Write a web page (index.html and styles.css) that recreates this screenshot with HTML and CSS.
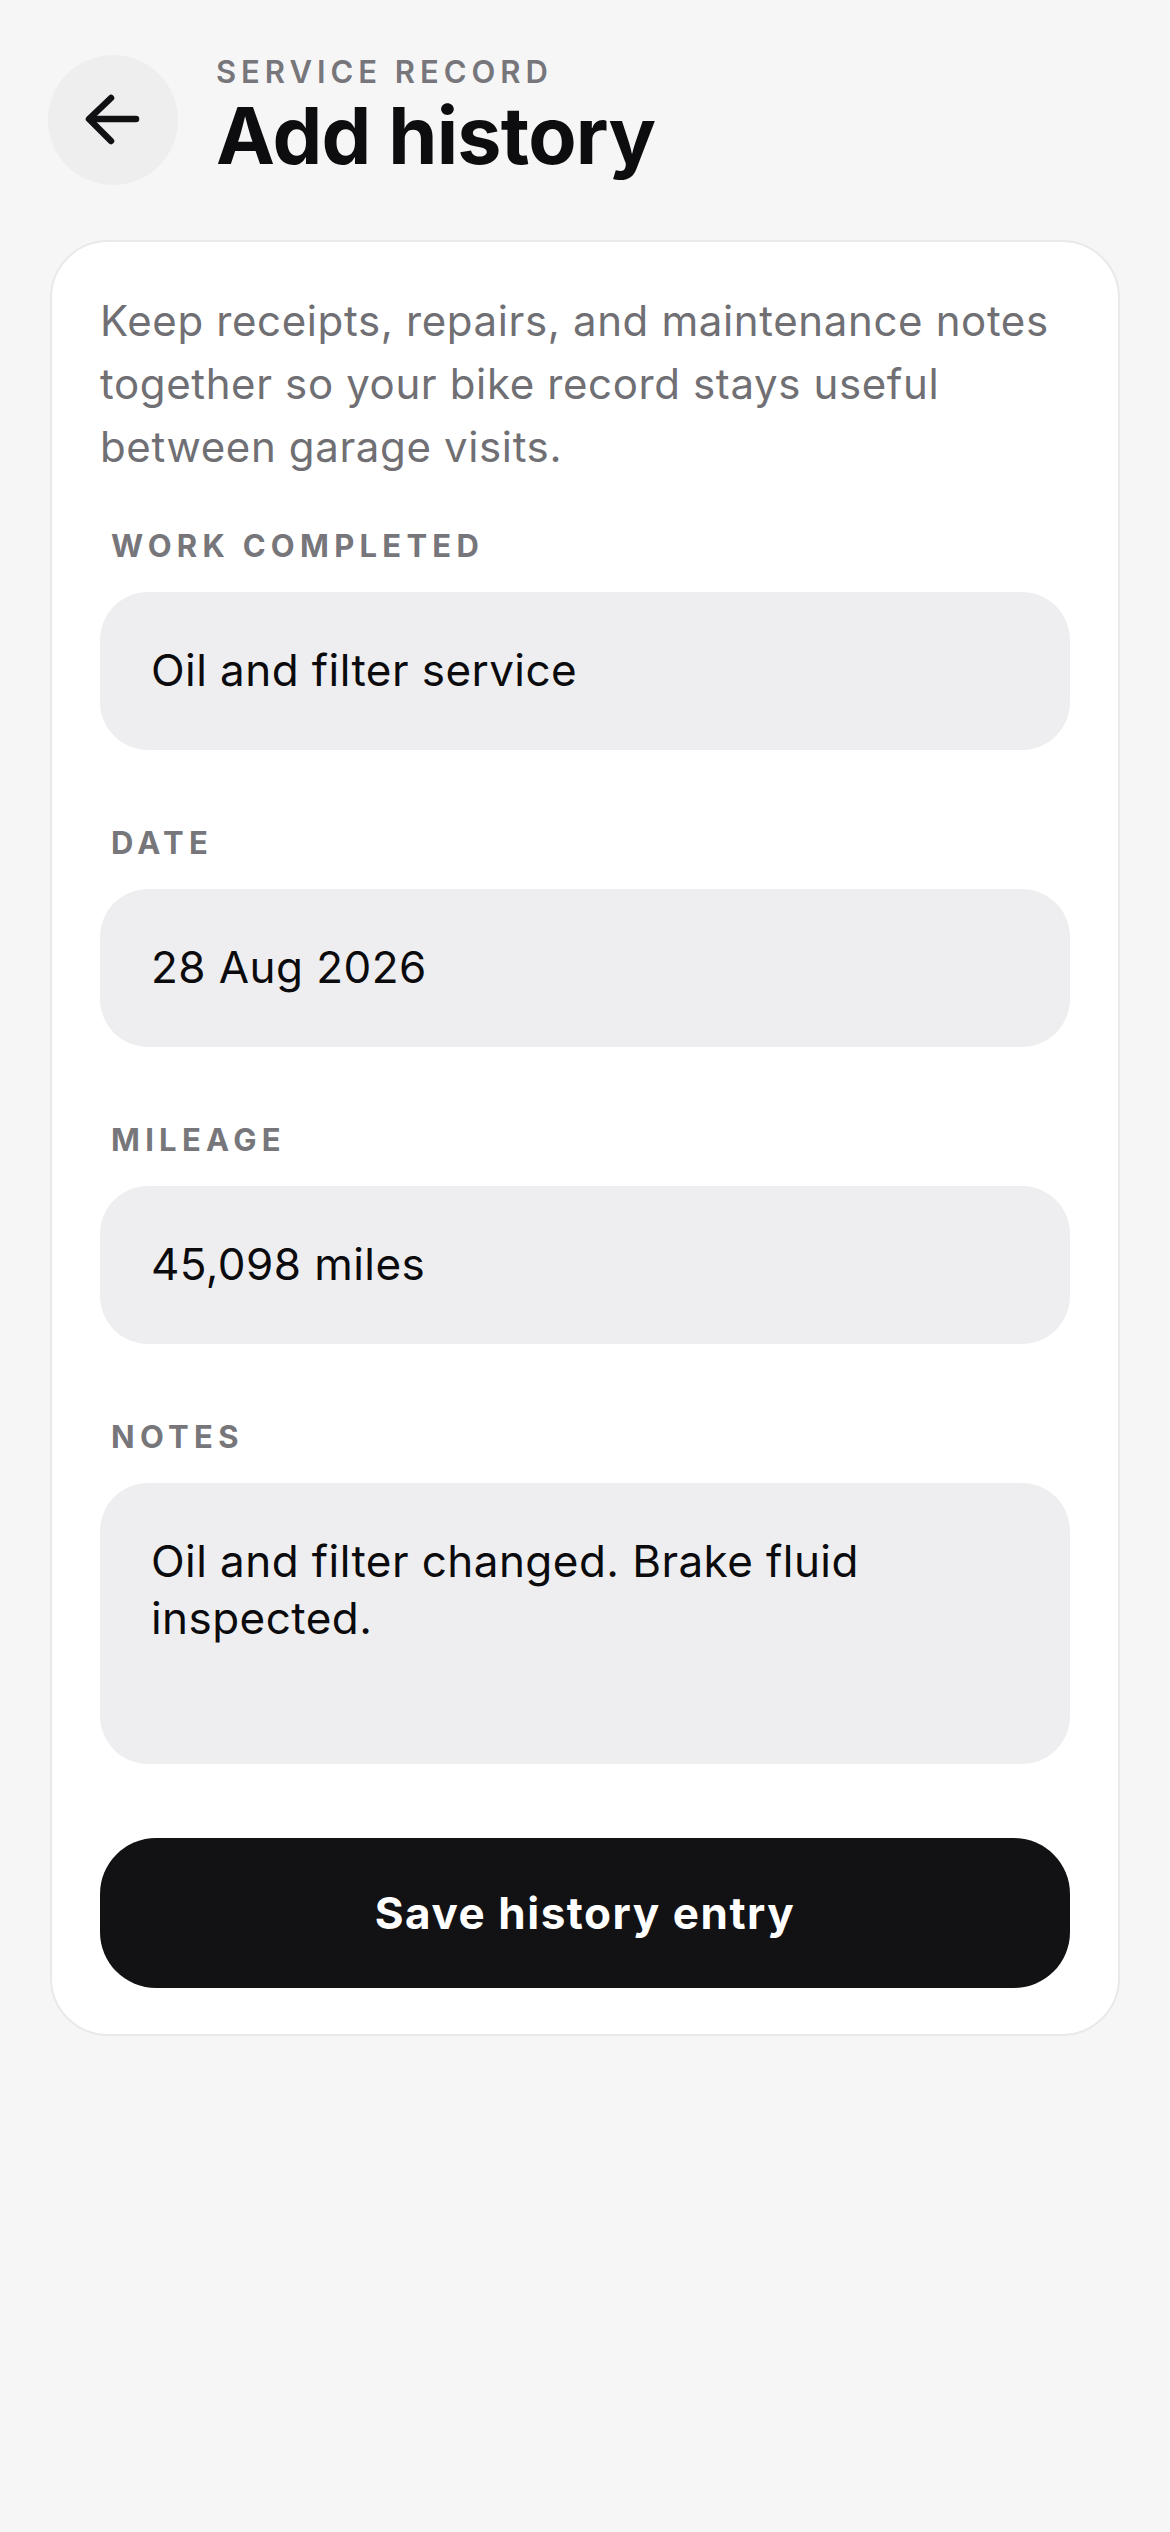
FILE: index.html
```html
<!DOCTYPE html>
<html lang="en">
<head>
<meta charset="utf-8">
<title>Add history</title>
<link rel="stylesheet" href="styles.css">
</head>
<body>
<div class="page">
  <header class="header">
    <button class="back" aria-label="Back">
      <svg width="130" height="130" viewBox="0 0 130 130" fill="none" stroke="#111113" stroke-width="6.5" stroke-linecap="round" stroke-linejoin="round">
        <path d="M88 64 H42"/>
        <path d="M63 43 L41 64 L63 86"/>
      </svg>
    </button>
    <div class="titles">
      <div class="eyebrow">SERVICE RECORD</div>
      <h1 class="title">Add history</h1>
    </div>
  </header>

  <section class="card">
    <p class="intro">Keep receipts, repairs, and maintenance notes together so your bike record stays useful between garage visits.</p>

    <div class="field">
      <div class="label">WORK COMPLETED</div>
      <div class="input">Oil and filter service</div>
    </div>

    <div class="field">
      <div class="label">DATE</div>
      <div class="input">28 Aug 2026</div>
    </div>

    <div class="field">
      <div class="label">MILEAGE</div>
      <div class="input">45,098 miles</div>
    </div>

    <div class="field">
      <div class="label">NOTES</div>
      <div class="input textarea">Oil and filter changed. Brake fluid inspected.</div>
    </div>

    <button class="save">Save history entry</button>
  </section>
</div>
</body>
</html>
```

FILE: styles.css
```css
* { box-sizing: border-box; }

html, body {
  margin: 0;
  padding: 0;
  background: #f6f6f7;
}

body {
  font-family: Inter, "Noto Sans", "Liberation Sans", sans-serif;
  color: #111113;
  min-height: 2532px;
}

.page {
  padding: 55px 50px 0 48px;
}

.header {
  display: flex;
  align-items: center;
  gap: 38px;
}

.back {
  width: 130px;
  height: 130px;
  border-radius: 50%;
  border: none;
  padding: 0;
  background: #eeeeef;
  display: flex;
  align-items: center;
  justify-content: center;
  flex-shrink: 0;
}

.back svg { display: block; }

.titles {
  display: flex;
  flex-direction: column;
  margin-top: -8px;
}

.eyebrow {
  font-size: 31px;
  font-weight: 600;
  letter-spacing: 0.16em;
  color: #76767b;
  line-height: 38px;
}

.title {
  margin: 0;
  font-size: 79px;
  font-weight: 700;
  letter-spacing: -0.01em;
  line-height: 88px;
  color: #0d0d0f;
}

.card {
  margin: 55px 0 0 2px;
  background: #ffffff;
  border: 2px solid #e9e9eb;
  border-radius: 58px;
  padding: 47px 48px 46px 48px;
  display: flex;
  flex-direction: column;
  gap: 74px;
}

.intro {
  margin: 0 0 -25px 0;
  font-size: 42px;
  line-height: 63px;
  letter-spacing: 0.015em;
  color: #6f6f74;
}

.field {
  display: flex;
  flex-direction: column;
  gap: 27px;
}

.label {
  padding-left: 11px;
  font-size: 31px;
  line-height: 38px;
  font-weight: 700;
  letter-spacing: 0.17em;
  color: #76767b;
}

.input {
  background: #eeeef0;
  border-radius: 48px;
  padding: 50px 50px 51px 51px;
  font-size: 44px;
  line-height: 57px;
  letter-spacing: 0.01em;
  color: #0b0b0d;
}

.textarea {
  min-height: 281px;
}

.save {
  height: 150px;
  border: none;
  border-radius: 56px;
  background: #121214;
  color: #ffffff;
  font-family: Inter, "Noto Sans", "Liberation Sans", sans-serif;
  font-size: 44px;
  font-weight: 700;
  letter-spacing: 0.035em;
}
```
